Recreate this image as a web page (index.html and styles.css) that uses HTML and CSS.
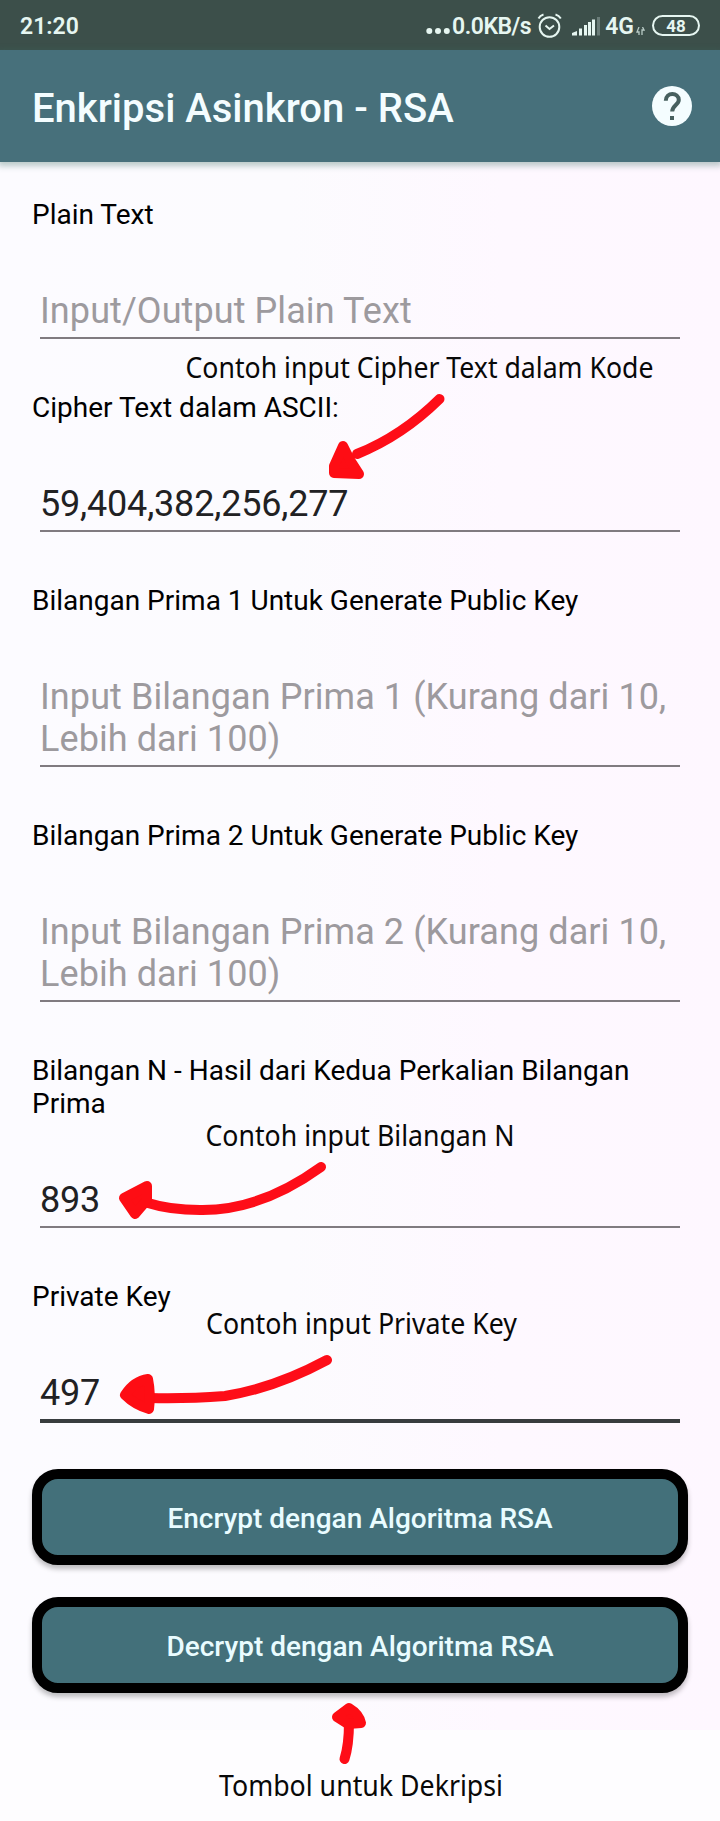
FILE: index.html
```html
<!DOCTYPE html>
<html lang="id">
<head>
<meta charset="utf-8">
<title>Enkripsi Asinkron - RSA</title>
<link rel="stylesheet" href="styles.css">
</head>
<body>
<div class="screen">
  <div class="status">
    <span class="clock">21:20</span>
    <svg class="dots" width="24" height="8" viewBox="0 0 24 8"><circle cx="3.3" cy="4" r="3"/><circle cx="12" cy="4" r="3"/><circle cx="20.8" cy="4" r="3"/></svg>
    <span class="rate">0.0KB/s</span>
    <svg class="alarm" width="26" height="26" viewBox="0 0 26 26"><circle cx="12.5" cy="14" r="9.8"/><path d="M8.500 12.500l4 3.500 4.500-3.500M1.500 5.500Q3 2.500 6.500 1.500M18.500 1.500Q22 2.500 23.800 5.500"/></svg>
    <svg class="signal" width="28" height="19" viewBox="0 0 28 19"><path d="M0 18.500V16l5-2v4.500zM7 11.500h3v7H7zM12 8h3v10.500h-3zM16 5h3v13.500h-3zM20 2.500h3v16h-3z"/><path class="dim" d="M25 0h3v18.500h-3z"/></svg>
    <span class="net">4G</span>
    <svg class="data" width="9" height="8" viewBox="0 0 9 8"><path d="M3 0L1 5h2v3M6 8V3h2L6.500 0"/></svg>
    <span class="battery"><span class="level">48</span></span>
  </div>
  <header class="appbar">
    <h1 class="title">Enkripsi Asinkron - RSA</h1>
    <svg class="help" width="40" height="40" viewBox="0 0 40 40"><circle cx="20" cy="20" r="20"/><path d="M13.800 14.800C13.800 5.800 26.800 6.200 26.800 14c0 4.800-6.600 5.500-6.600 11.500"/><path class="point" d="M18 30h4v4h-4z"/></svg>
  </header>
  <main class="form">
    <div class="field">
      <label class="label">Plain Text</label>
      <div class="input hint">Input/Output Plain Text</div>
    </div>
    <div class="field">
      <label class="label">Cipher Text dalam ASCII:</label>
      <div class="input">59,404,382,256,277</div>
    </div>
    <div class="field">
      <label class="label">Bilangan Prima 1 Untuk Generate Public Key</label>
      <div class="input hint">Input Bilangan Prima 1 (Kurang dari 10,<br>Lebih dari 100)</div>
    </div>
    <div class="field">
      <label class="label">Bilangan Prima 2 Untuk Generate Public Key</label>
      <div class="input hint">Input Bilangan Prima 2 (Kurang dari 10,<br>Lebih dari 100)</div>
    </div>
    <div class="field">
      <label class="label">Bilangan N - Hasil dari Kedua Perkalian Bilangan<br>Prima</label>
      <div class="input">893</div>
    </div>
    <div class="field">
      <label class="label">Private Key</label>
      <div class="input focused">497</div>
    </div>
    <div class="actions">
      <button class="button">Encrypt dengan Algoritma RSA</button>
      <button class="button">Decrypt dengan Algoritma RSA</button>
    </div>
  </main>
  <svg class="notes" width="720" height="1821" viewBox="0 0 720 1821">
    <g class="captions">
      <text x="185.500" y="378" textLength="468" lengthAdjust="spacingAndGlyphs">Contoh input Cipher Text dalam Kode</text>
      <text x="205.500" y="1146" textLength="309" lengthAdjust="spacingAndGlyphs">Contoh input Bilangan N</text>
      <text x="206" y="1334" textLength="311" lengthAdjust="spacingAndGlyphs">Contoh input Private Key</text>
      <text x="219" y="1796" textLength="284" lengthAdjust="spacingAndGlyphs">Tombol untuk Dekripsi</text>
    </g>
    <g class="strokes">
      <path d="M439.500 399Q402 436 357 454"/>
      <path d="M321 1167Q260 1211 200 1210Q170 1210 148 1203"/>
      <path d="M327 1360Q275 1388 225 1396Q185 1399 150 1398"/>
      <path d="M349 1722Q349 1745 344.500 1759"/>
    </g>
    <g class="heads">
      <path d="M343 446L334 466 334 473 359 474 350 460z"/>
      <path d="M147 1186L124 1198 135 1214 147 1200z"/>
      <path d="M148 1379Q134 1381 125 1395Q135 1405 149 1409Q151 1394 148 1379z"/>
      <path d="M349 1708L337 1717 348 1724 361 1723Q359 1714 349 1708z"/>
    </g>
  </svg>
</div>
</body>
</html>
```
FILE: styles.css
```css
body {
  margin: 0;
  background: #fefdff;
  font-family: Roboto, "Liberation Sans", sans-serif;
}

.screen {
  position: relative;
  width: 720px;
  height: 1821px;
  overflow: hidden;
}

.status {
  box-sizing: border-box;
  display: flex;
  align-items: center;
  height: 50px;
  padding: 3px 20px 0;
  background: #3c4f4a;
  color: #e6f6f1;
  font-size: 23px;
  font-weight: 600;
  line-height: 28px;
}

.status svg {
  fill: #e6f6f1;
}

.clock {
  flex: 1;
}

.dots {
  margin: 9px 2px 0 0;
}

.rate {
  letter-spacing: -0.5px;
}

.status .alarm {
  margin: 0 9px 2px 6px;
  fill: none;
  stroke: #e6f6f1;
  stroke-width: 2;
}

.signal {
  margin: 0 5px 1px 0;
}

.signal .dim {
  fill: #6a7c78;
}

.status .data {
  margin: 8px 7px 0 2px;
  fill: none;
  stroke: #b9cbc6;
  stroke-width: 1.3;
}

.battery {
  box-sizing: border-box;
  width: 48px;
  height: 21px;
  margin-bottom: 2px;
  border: 2px solid #e6f6f1;
  border-radius: 11px;
  text-align: center;
  font-size: 17px;
  font-weight: 700;
  line-height: 18px;
}

.appbar {
  position: relative;
  box-sizing: border-box;
  display: flex;
  align-items: center;
  justify-content: space-between;
  height: 112px;
  padding: 0 28px 0 32px;
  background: #47707b;
  box-shadow: 0 2px 6px 2px rgba(60, 110, 100, 0.35);
}

.title {
  margin: 6px 0 0;
  color: #f4fdff;
  font-size: 40px;
  font-weight: 500;
  line-height: 48px;
}

.help {
  fill: #f4fdff;
}

.help path {
  fill: none;
  stroke: #47605f;
  stroke-width: 4;
}

.help .point {
  fill: #47605f;
  stroke: none;
}

.form {
  box-sizing: border-box;
  height: 1568px;
  padding: 36px 32px 0;
  background: linear-gradient(90deg, #fcfbff 0%, #fcfbfe 40%, #fef8ff 70%, #fef7ff 100%);
}

.field {
  display: flex;
  flex-direction: column;
  gap: 59px;
  margin-bottom: 52px;
}

.label {
  color: #000;
  font-size: 28px;
  line-height: 33px;
  white-space: nowrap;
}

.input {
  margin: 0 8px;
  padding-bottom: 5px;
  border-bottom: 2px solid #807b80;
  color: #212123;
  font-size: 36px;
  letter-spacing: -0.18px;
  line-height: 42px;
  white-space: nowrap;
}

.hint {
  color: #9d9a9e;
  letter-spacing: 0.08px;
}

.focused {
  border-bottom: 4px solid #383c3e;
}

.actions {
  display: flex;
  flex-direction: column;
  gap: 32px;
  margin-top: -6px;
}

.button {
  height: 96px;
  padding: 2px 0 0;
  border: 10px solid #000;
  border-radius: 26px;
  background: #43707a;
  box-shadow: 0 4px 5px rgba(0, 0, 0, 0.25);
  color: #e9fcff;
  font: 500 28px/33px Roboto, "Liberation Sans", sans-serif;
}

.notes {
  position: absolute;
  top: 0;
  left: 0;
}

.captions {
  fill: #080808;
  font-family: "Noto Sans", "Open Sans", sans-serif;
  font-size: 28.5px;
}

.strokes {
  fill: none;
  stroke: #fe0d18;
  stroke-width: 10;
  stroke-linecap: round;
}

.heads {
  fill: #fe0d14;
  stroke: #fe0d14;
  stroke-width: 10;
  stroke-linejoin: round;
}
```
